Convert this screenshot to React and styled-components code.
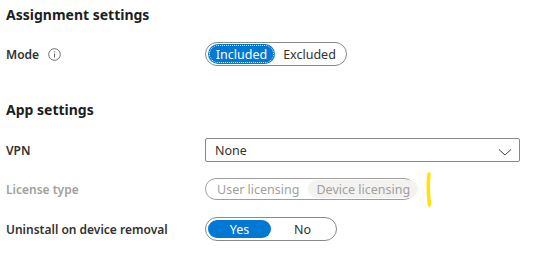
import styled, { createGlobalStyle } from "styled-components";

const Global = createGlobalStyle`
  body {
    margin: 0;
    background: #fff;
    font-family: "Noto Sans", "Open Sans", sans-serif;
    color: #323130;
  }
`;

const Page = styled.div`
  width: 535px;
  height: 262px;
  padding: 4px 0 0 6px;
  box-sizing: border-box;
  position: relative;
  overflow: hidden;
`;

const Heading = styled.h2`
  margin: 0;
  font-size: 14px;
  font-weight: 700;
  line-height: 22px;
  color: #201f1e;
  margin-top: ${(p) => p.$top || 0}px;
`;

const Row = styled.div`
  display: grid;
  grid-template-columns: 199px auto;
  align-items: center;
  margin-top: ${(p) => p.$top || 0}px;
`;

const Label = styled.div`
  font-size: 12px;
  font-weight: 600;
  color: ${(p) => (p.$disabled ? "#a19f9d" : "#323130")};
  display: flex;
  align-items: center;
  gap: 9px;
`;

const Toggle = styled.div`
  display: inline-flex;
  align-items: center;
  width: ${(p) => p.$width}px;
  height: ${(p) => p.$height || 24}px;
  box-sizing: border-box;
  border: 1px solid ${(p) => (p.$disabled ? "#a19f9d" : "#8a8886")};
  border-radius: 12px;
  padding: 0 2px;
`;

const Option = styled.div`
  flex: ${(p) => (p.$grow ? 1 : "0 0 auto")};
  width: ${(p) => (p.$w ? `${p.$w}px` : "auto")};
  height: ${(p) => (p.$h || 18)}px;
  border-radius: 10px;
  display: flex;
  align-items: center;
  justify-content: center;
  padding: 0 ${(p) => p.$pad ?? 0}px;
  font-size: 12.5px;
  box-sizing: border-box;
  color: ${(p) =>
    p.$selected ? "#fff" : p.$disabled ? "#a19f9d" : "#323130"};
  background: ${(p) =>
    p.$selected ? "#0078d4" : p.$muted ? "#f3f2f1" : "transparent"};
  outline: ${(p) => (p.$focus ? "1px dotted #fff" : "none")};
  outline-offset: -2px;
`;

const Select = styled.div`
  width: 315px;
  height: 24px;
  box-sizing: border-box;
  border: 1px solid #8a8886;
  border-radius: 2px;
  display: flex;
  align-items: center;
  justify-content: space-between;
  padding: 0 7px 0 9px;
  font-size: 12.5px;
  color: #323130;
`;

const Marker = styled.svg`
  position: absolute;
  left: 424px;
  top: 172px;
`;

const InfoIcon = () => (
  <svg width="13" height="13" viewBox="0 0 13 13">
    <circle cx="6.5" cy="6.5" r="5.8" fill="none" stroke="#605e5c" strokeWidth="0.9" />
    <line x1="6.5" y1="5.6" x2="6.5" y2="9.6" stroke="#605e5c" strokeWidth="1" />
    <circle cx="6.5" cy="3.8" r="0.65" fill="#605e5c" />
  </svg>
);

const Chevron = () => (
  <svg width="14" height="8" viewBox="0 0 14 8" style={{ marginTop: 4 }}>
    <path d="M1 1.5 L7 7 L13 1.5" fill="none" stroke="#323130" strokeWidth="0.9" />
  </svg>
);

export default function App() {
  return (
    <>
      <Global />
      <Page>
        <Heading>Assignment settings</Heading>
        <Row $top={16}>
          <Label>
            Mode <InfoIcon />
          </Label>
          <Toggle $width={142}>
            <Option $selected $focus $w={67} $h={20}>Included</Option>
            <Option $grow>Excluded</Option>
          </Toggle>
        </Row>

        <Heading $top={33}>App settings</Heading>
        <Row $top={17}>
          <Label>VPN</Label>
          <Select>
            None
            <Chevron />
          </Select>
        </Row>
        <Row $top={16}>
          <Label $disabled>License type</Label>
          <Toggle $width={210} $height={22} $disabled>
            <Option $disabled $pad={9}>User licensing</Option>
            <Option $disabled $muted $pad={8}>Device licensing</Option>
          </Toggle>
        </Row>
        <Row $top={17}>
          <Label>Uninstall on device removal</Label>
          <Toggle $width={132}>
            <Option $selected $w={63}>Yes</Option>
            <Option $grow>No</Option>
          </Toggle>
        </Row>
        <Marker width="10" height="36" viewBox="0 0 10 36">
          <path d="M5 2 C4 10 4 20 5.5 33" fill="none" stroke="#ffe400" strokeWidth="3.5" strokeLinecap="round" />
        </Marker>
      </Page>
    </>
  );
}
